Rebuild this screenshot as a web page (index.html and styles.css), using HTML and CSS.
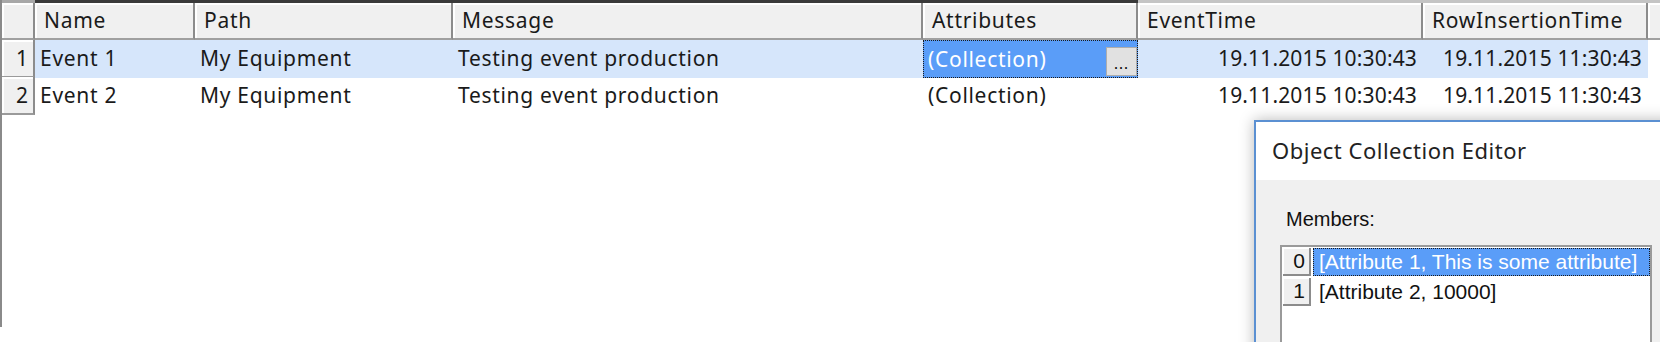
FILE: index.html
```html
<!DOCTYPE html>
<html>
<head>
    <meta charset="UTF-8"/>
    <title>Events</title>
    <link rel="stylesheet" href="styles.css">
</head>
<body>
<div class="grid">
    <div class="topline">
        <span class="tl-corner"></span>
        <span class="tl-dark"></span>
        <span class="tl-light"></span>
    </div>

    <div class="row head">
        <div class="corner"></div>
        <div class="hcell">Name</div>
        <div class="hcell">Path</div>
        <div class="hcell">Message</div>
        <div class="hcell">Attributes</div>
        <div class="hcell">EventTime</div>
        <div class="hcell">RowInsertionTime</div>
        <div class="hcell filler"></div>
    </div>

    <div class="row current">
        <div class="rowhead">1</div>
        <div class="cell">Event 1</div>
        <div class="cell">My Equipment</div>
        <div class="cell">Testing event production</div>
        <div class="cell editing">
            <span>(Collection)</span>
            <span class="dots">...</span>
        </div>
        <div class="cell num">19.11.2015 10:30:43</div>
        <div class="cell num">19.11.2015 11:30:43</div>
        <div class="cell blank"></div>
    </div>

    <div class="row">
        <div class="rowhead">2</div>
        <div class="cell">Event 2</div>
        <div class="cell">My Equipment</div>
        <div class="cell">Testing event production</div>
        <div class="cell">(Collection)</div>
        <div class="cell num">19.11.2015 10:30:43</div>
        <div class="cell num">19.11.2015 11:30:43</div>
        <div class="cell blank"></div>
    </div>
</div>

<!-- editor window opened from the Attributes cell -->
<div class="dialog">
    <div class="dialog-title">Object Collection Editor</div>
    <div class="dialog-body">
        <div class="members-label">Members:</div>
        <div class="listbox">
            <div class="item">
                <span class="idx">0</span>
                <span class="item-text selected">[Attribute 1, This is some attribute]</span>
            </div>
            <div class="item">
                <span class="idx">1</span>
                <span class="item-text">[Attribute 2, 10000]</span>
            </div>
        </div>
    </div>
</div>
</body>
</html>
```

FILE: styles.css
```css
body {
    margin: 0;
    width: 1660px;
    height: 342px;
    overflow: hidden;
    position: relative;
    background: #fff;
    font-family: "Noto Sans", "Open Sans", sans-serif;
    font-size: 21px;
    letter-spacing: 0.7px;
    color: #1a1a1a;
}

.grid {
    border-left: 2px solid #8a8a8a;
    height: 327px;
}

.topline {
    display: flex;
    height: 3px;
}

.tl-corner {
    width: 33px;
    background: #a8a8a8;
}

.tl-dark {
    width: 1103px;
    background: #3a3a3a;
}

.tl-light {
    flex: 1;
    background: #c4c4c4;
}

.row {
    display: grid;
    grid-template-columns: 33px 160px 258px 470px 215px 285px 225px 1fr;
    height: 37px;
}

.corner,
.hcell {
    background: #f0f0f0;
    border-right: 2px solid #8c8c8c;
    border-bottom: 2px solid #a0a0a0;
    box-shadow: inset 2px 2px #fff;
}

.hcell {
    padding-left: 9px;
    line-height: 35px;
    white-space: nowrap;
    overflow: hidden;
}

.hcell.filler {
    border-right: none;
}

.rowhead {
    background: #f0f0f0;
    border-right: 2px solid #8c8c8c;
    border-bottom: 2px solid #9a9a9a;
    box-shadow: inset 2px 2px #fff;
    text-align: right;
    padding-right: 5px;
    line-height: 36px;
    letter-spacing: 0;
}

.cell {
    padding-left: 5px;
    line-height: 37px;
    white-space: nowrap;
}

.cell.num {
    text-align: right;
    padding-left: 0;
    padding-right: 6px;
    letter-spacing: 0.15px;
}

.current .cell {
    background: #d6e6fb;
}

.current .cell.blank,
.cell.blank {
    background: #fff;
}

.current .cell.editing {
    background: #5a9df8;
    color: #fff;
    border: 1px dotted #1a1a1a;
    display: flex;
    align-items: center;
    justify-content: space-between;
    padding: 0 0 0 4px;
    line-height: 35px;
}

.dots {
    width: 29px;
    height: 27px;
    margin: 4px 0 0;
    background: #e1e1e1;
    border: 1px solid #adadad;
    color: #000;
    font-size: 15px;
    line-height: 30px;
    text-align: center;
    letter-spacing: 1px;
}

.dialog {
    position: absolute;
    left: 1254px;
    top: 120px;
    right: -30px;
    bottom: -30px;
    border: 2px solid #5b90d2;
    background: #f0f0f0;
    box-shadow: 0 0 14px rgba(0, 0, 0, 0.28);
}

.dialog-title {
    height: 58px;
    background: #fff;
    padding-left: 16px;
    line-height: 56px;
    font-size: 22px;
    letter-spacing: 0.5px;
    color: #222;
}

.dialog-body {
    padding: 27px 0 0 24px;
    font-family: "Liberation Sans", Arial, sans-serif;
    font-size: 21px;
    letter-spacing: 0;
    color: #111;
}

.members-label {
    padding-left: 6px;
    height: 38px;
    line-height: 24px;
    font-size: 20px;
}

.listbox {
    width: 368px;
    height: 120px;
    background: #fff;
    border: 2px solid #9a9a9a;
}

.item {
    display: flex;
    align-items: center;
    height: 30px;
}

.idx {
    width: 22px;
    height: 26px;
    margin: 0 2px 0 1px;
    background: #f0f0f0;
    border-right: 2px solid #8c8c8c;
    border-bottom: 2px solid #8c8c8c;
    box-shadow: inset 1px 1px #fff;
    text-align: right;
    padding-right: 4px;
    line-height: 26px;
}

.item-text {
    flex: 1;
    padding-left: 6px;
    line-height: 28px;
    height: 28px;
    white-space: nowrap;
}

.item-text.selected {
    background: #5a9df8;
    color: #fff;
    outline: 1px dotted #1a1a1a;
    outline-offset: -1px;
}
```
